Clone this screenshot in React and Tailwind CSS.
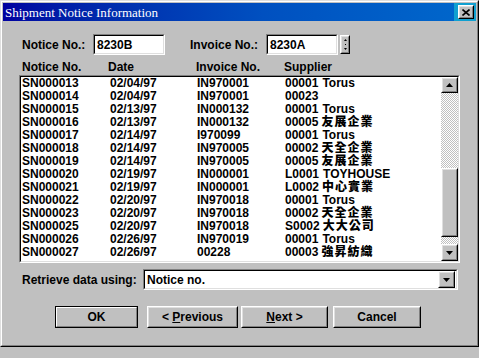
import React from "react";

const rows = [
  ["SN000013", "02/04/97", "IN970001", "00001", "Torus"],
  ["SN000014", "02/04/97", "IN970001", "00023", ""],
  ["SN000015", "02/13/97", "IN000132", "00001", "Torus"],
  ["SN000016", "02/13/97", "IN000132", "00005", "友展企業"],
  ["SN000017", "02/14/97", "I970099", "00001", "Torus"],
  ["SN000018", "02/14/97", "IN970005", "00002", "天全企業"],
  ["SN000019", "02/14/97", "IN970005", "00005", "友展企業"],
  ["SN000020", "02/19/97", "IN000001", "L0001", "TOYHOUSE"],
  ["SN000021", "02/19/97", "IN000001", "L0002", "中心實業"],
  ["SN000022", "02/20/97", "IN970018", "00001", "Torus"],
  ["SN000023", "02/20/97", "IN970018", "00002", "天全企業"],
  ["SN000025", "02/20/97", "IN970018", "S0002", "大大公司"],
  ["SN000026", "02/26/97", "IN970019", "00001", "Torus"],
  ["SN000027", "02/26/97", "00228", "00003", "強昇紡織"],
];

const isCJK = (s) => /[\u3400-\u9fff]/.test(s);

function Raised({ className = "", children, def = false }) {
  return (
    <div
      className={
        "border " +
        (def
          ? "border-black "
          : "border-t-white border-l-white border-r-black border-b-black ") +
        className
      }
    >
      <div
        className={
          "w-full h-full border " +
          (def
            ? "border-t-white border-l-white border-r-[#808080] border-b-[#808080]"
            : "border-t-[#dfdfdf] border-l-[#dfdfdf] border-r-[#808080] border-b-[#808080]") +
          " bg-[#c0c0c0] flex items-center justify-center"
        }
      >
        {children}
      </div>
    </div>
  );
}

function Sunken({ className = "", children, innerClass = "" }) {
  return (
    <div
      className={
        "border border-t-[#808080] border-l-[#808080] border-r-white border-b-white " +
        className
      }
    >
      <div
        className={
          "w-full h-full border border-t-black border-l-black border-r-[#dfdfdf] border-b-[#dfdfdf] bg-white " +
          innerClass
        }
      >
        {children}
      </div>
    </div>
  );
}

function TriDown() {
  return (
    <svg width="7" height="4" viewBox="0 0 7 4">
      <polygon points="0,0 7,0 3.5,4" fill="black" />
    </svg>
  );
}
function TriUp() {
  return (
    <svg width="7" height="4" viewBox="0 0 7 4">
      <polygon points="0,4 7,4 3.5,0" fill="black" />
    </svg>
  );
}

function Btn({ children, def, className = "" }) {
  return (
    <Raised def={def} className={"h-[22px] " + className}>
      <span className="text-[12px] font-bold leading-none">{children}</span>
    </Raised>
  );
}

export default function App() {
  return (
    <div className="w-[479px] h-[358px] bg-[#c0c0c0] font-['Liberation_Sans','Noto_Sans_CJK_TC',sans-serif] text-black">
      <div className="w-full h-[347px] border border-t-[#dfdfdf] border-l-[#dfdfdf] border-r-black border-b-black">
        <div className="w-full h-full border border-t-white border-l-white border-r-[#808080] border-b-[#808080] p-[1px] flex flex-col">
          {/* Title bar */}
          <div className="h-[18px] shrink-0 flex items-center bg-gradient-to-r from-[#0000a0] via-[#0050c0] via-55% to-[#0068cc]">
            <span className="pl-[2px] font-['Liberation_Serif',serif] text-[13px] text-white leading-none">
              Shipment Notice Information
            </span>
            <div className="ml-auto h-full w-[22px] bg-[#10a0d0] flex items-center justify-start pl-[4px]">
              <Raised className="w-[16px] h-[14px]">
                <svg width="8" height="7" viewBox="0 0 8 7">
                  <path d="M0.5 0.5 L7.5 6.5 M7.5 0.5 L0.5 6.5" stroke="black" strokeWidth="1.6" />
                </svg>
              </Raised>
            </div>
          </div>

          {/* Notice / invoice row */}
          <div className="flex items-center mt-[13px] pl-[19px] text-[12px] font-bold">
            <div className="w-[71px]">Notice No.:</div>
            <Sunken className="w-[72px] h-[21px]" innerClass="flex items-center pl-[2px]">
              <span className="font-bold">8230B</span>
            </Sunken>
            <div className="ml-[25px] w-[76px]">Invoice No.:</div>
            <Sunken className="w-[72px] h-[21px]" innerClass="flex items-center pl-[2px]">
              <span className="font-bold">8230A</span>
            </Sunken>
            <Raised className="ml-[2px] w-[10px] h-[19px]">
              <div className="flex flex-col items-center gap-[3px]">
                <svg width="3" height="2" viewBox="0 0 3 2"><polygon points="0,2 3,2 1.5,0" fill="black" /></svg>
                <div className="w-[1px] h-[1px] bg-black" />
                <svg width="3" height="2" viewBox="0 0 3 2"><polygon points="0,0 3,0 1.5,2" fill="black" /></svg>
              </div>
            </Raised>
          </div>

          {/* Header */}
          <div className="flex mt-[5px] pl-[19px] text-[12px] font-bold leading-[14px]">
            <div className="w-[86px]">Notice No.</div>
            <div className="w-[88px]">Date</div>
            <div className="w-[88px]">Invoice No.</div>
            <div>Supplier</div>
          </div>

          {/* List */}
          <div className="ml-[16px] mt-[1px] w-[441px] h-[188px] border border-t-[#808080] border-l-[#808080] border-r-white border-b-white">
            <div className="w-full h-full border border-t-black border-l-black border-r-[#dfdfdf] border-b-[#dfdfdf] bg-white flex">
              <div className="flex-1 overflow-hidden pl-[1px]">
                {rows.map((r) => (
                  <div key={r[0]} className="flex h-[13px] items-center text-[12px] font-bold leading-[13px] whitespace-nowrap">
                    <div className="w-[88px]">{r[0]}</div>
                    <div className="w-[87px]">{r[1]}</div>
                    <div className="w-[88px]">{r[2]}</div>
                    <div className="flex items-center h-[13px]">
                      <span>{r[3]}</span>
                      {r[4] &&
                        (isCJK(r[4]) ? (
                          <span className="ml-[3px] font-['Noto_Sans_CJK_TC',sans-serif] font-black text-[12px] leading-[12px] tracking-[1px] -translate-y-[2px]">
                            {r[4]}
                          </span>
                        ) : (
                          <span className="ml-[4px]">{r[4]}</span>
                        ))}
                    </div>
                  </div>
                ))}
              </div>
              {/* Scrollbar */}
              <div className="w-[17px] h-full flex flex-col">
                <Raised className="w-[17px] h-[16px] shrink-0">
                  <TriUp />
                </Raised>
                <div className="flex-1 flex flex-col bg-[image:repeating-conic-gradient(#ffffff_0_25%,#c0c0c0_0_50%)] bg-[length:2px_2px]">
                  <div className="h-[75px] shrink-0" />
                  <Raised className="w-[17px] h-[69px] shrink-0" />
                </div>
                <Raised className="w-[17px] h-[17px] shrink-0">
                  <TriDown />
                </Raised>
              </div>
            </div>
          </div>

          {/* Retrieve */}
          <div className="flex items-center mt-[6px] pl-[19px] text-[12px] font-bold">
            <div className="w-[121px]">Retrieve data using:</div>
            <Sunken className="w-[315px] h-[21px]" innerClass="flex items-center pl-[2px] pr-[1px]">
              <span className="font-bold">Notice no.</span>
              <Raised className="ml-auto w-[17px] h-[17px]">
                <TriDown />
              </Raised>
            </Sunken>
          </div>

          {/* Buttons */}
          <div className="flex items-center mt-[16px] pl-[52px]">
            <Btn def className="w-[83px]">OK</Btn>
            <Btn className="w-[91px] ml-[9px]">
              &lt; <span className="underline">P</span>revious
            </Btn>
            <Btn className="w-[87px] ml-[3px]">
              <span className="underline">N</span>ext &gt;
            </Btn>
            <Btn className="w-[88px] ml-[5px]">Cancel</Btn>
          </div>
        </div>
      </div>
    </div>
  );
}
